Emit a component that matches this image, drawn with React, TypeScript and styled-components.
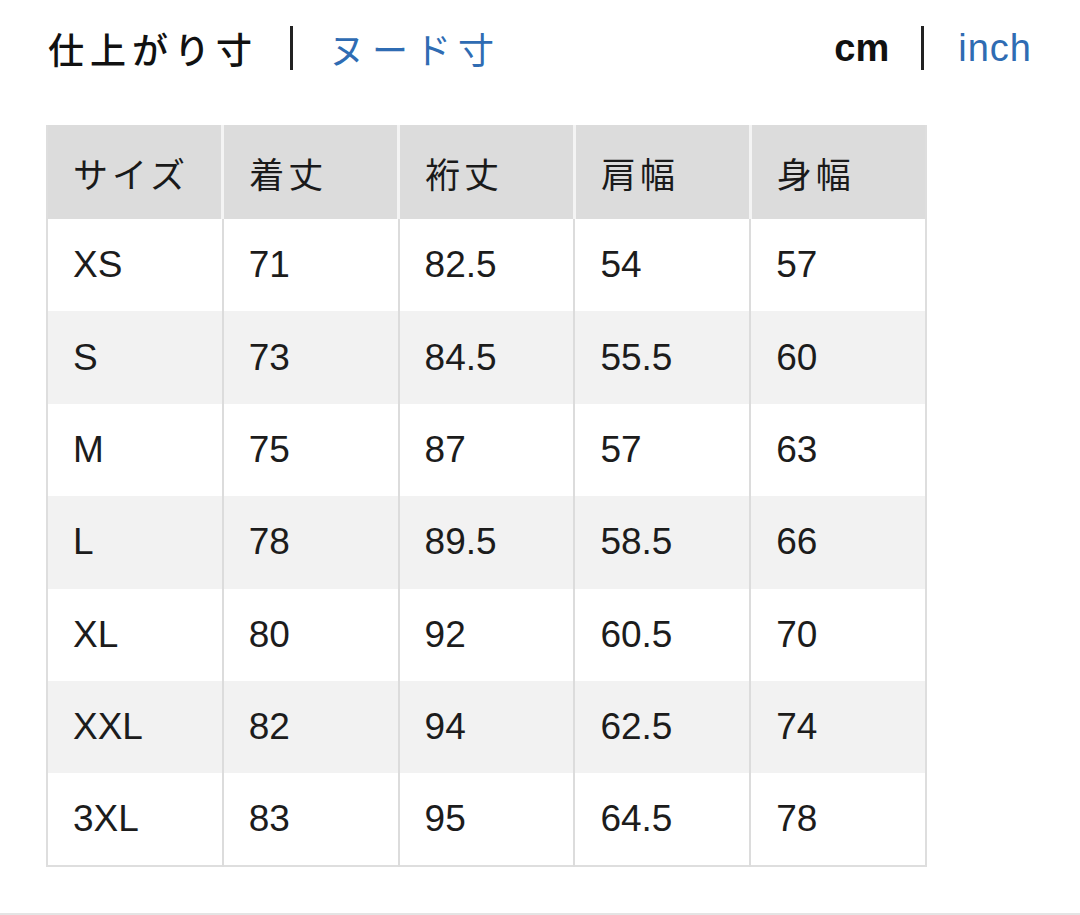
import styled, { createGlobalStyle } from "styled-components";

const GlobalStyle = createGlobalStyle`
  html, body {
    margin: 0;
    padding: 0;
    background: #ffffff;
  }
  body {
    font-family: "Liberation Sans", "Noto Sans CJK JP", sans-serif;
    color: #1a1a1a;
  }
`;

interface SizeRow {
  size: string;
  values: string[];
}

const headers = ["サイズ", "着丈", "裄丈", "肩幅", "身幅"];

const rows: SizeRow[] = [
  { size: "XS", values: ["71", "82.5", "54", "57"] },
  { size: "S", values: ["73", "84.5", "55.5", "60"] },
  { size: "M", values: ["75", "87", "57", "63"] },
  { size: "L", values: ["78", "89.5", "58.5", "66"] },
  { size: "XL", values: ["80", "92", "60.5", "70"] },
  { size: "XXL", values: ["82", "94", "62.5", "74"] },
  { size: "3XL", values: ["83", "95", "64.5", "78"] },
];

const App = () => {
  return (
    <>
      <GlobalStyle />
      <Page>
        <TopBar>
          <Switcher>
            <Option $active>仕上がり寸</Option>
            <Divider />
            <Option>ヌード寸</Option>
          </Switcher>
          <Switcher>
            <Unit $active>cm</Unit>
            <Divider />
            <Unit>inch</Unit>
          </Switcher>
        </TopBar>
        <Table>
          <thead>
            <tr>
              {headers.map((h) => (
                <HeadCell key={h}>{h}</HeadCell>
              ))}
            </tr>
          </thead>
          <tbody>
            {rows.map((row, i) => (
              <BodyRow key={row.size} $striped={i % 2 === 1}>
                <Cell>{row.size}</Cell>
                {row.values.map((v, j) => (
                  <Cell key={j}>{v}</Cell>
                ))}
              </BodyRow>
            ))}
          </tbody>
        </Table>
      </Page>
    </>
  );
};
export default App;

const Page = styled.div`
  height: 913px;
  padding: 0 48px 0 46px;
  border-bottom: 2px solid #e4e4e4;
`;

const TopBar = styled.div`
  height: 96px;
  display: flex;
  align-items: center;
  justify-content: space-between;
  margin-bottom: 29px;
`;

const Switcher = styled.div`
  display: flex;
  align-items: center;
`;

const Divider = styled.span`
  display: block;
  width: 3px;
  height: 44px;
  background: #222;
  margin: 0 34px 0 32px;
`;

const Option = styled.span<{ $active?: boolean }>`
  font-family: "Noto Sans CJK JP", sans-serif;
  font-size: 36px;
  letter-spacing: ${(p) => (p.$active ? "6px" : "7px")};
  font-weight: ${(p) => (p.$active ? 500 : 400)};
  color: ${(p) => (p.$active ? "#111" : "#2f6cb3")};
  margin-left: 2px;
`;

const Unit = styled.span<{ $active?: boolean }>`
  font-family: "Liberation Sans", sans-serif;
  font-size: 38px;
  font-weight: ${(p) => (p.$active ? 700 : 400)};
  color: ${(p) => (p.$active ? "#111" : "#2f6cb3")};
  letter-spacing: ${(p) => (p.$active ? "0" : "1px")};
`;

const Table = styled.table`
  width: 881px;
  border-collapse: collapse;
  table-layout: fixed;
  border-left: 2px solid #dedede;
  border-right: 2px solid #dedede;
  border-bottom: 2px solid #dedede;
`;

const HeadCell = styled.th`
  height: 94px;
  padding: 0 0 0 25px;
  text-align: left;
  background: #dcdcdc;
  font-family: "Noto Sans CJK JP", sans-serif;
  font-weight: 400;
  font-size: 35px;
  letter-spacing: 4px;
  color: #1a1a1a;
  border-left: 3px solid #f4f4f4;
  &:first-child {
    border-left: none;
  }
`;

const BodyRow = styled.tr<{ $striped: boolean }>`
  height: 92.4px;
  background: ${(p) => (p.$striped ? "#f2f2f2" : "#ffffff")};
`;

const Cell = styled.td`
  padding: 0 0 0 25px;
  font-family: "Liberation Sans", "Noto Sans CJK JP", sans-serif;
  font-size: 37px;
  color: #1c1c1c;
  border-left: 2px solid #dcdcdc;
  &:first-child {
    border-left: none;
  }
`;
